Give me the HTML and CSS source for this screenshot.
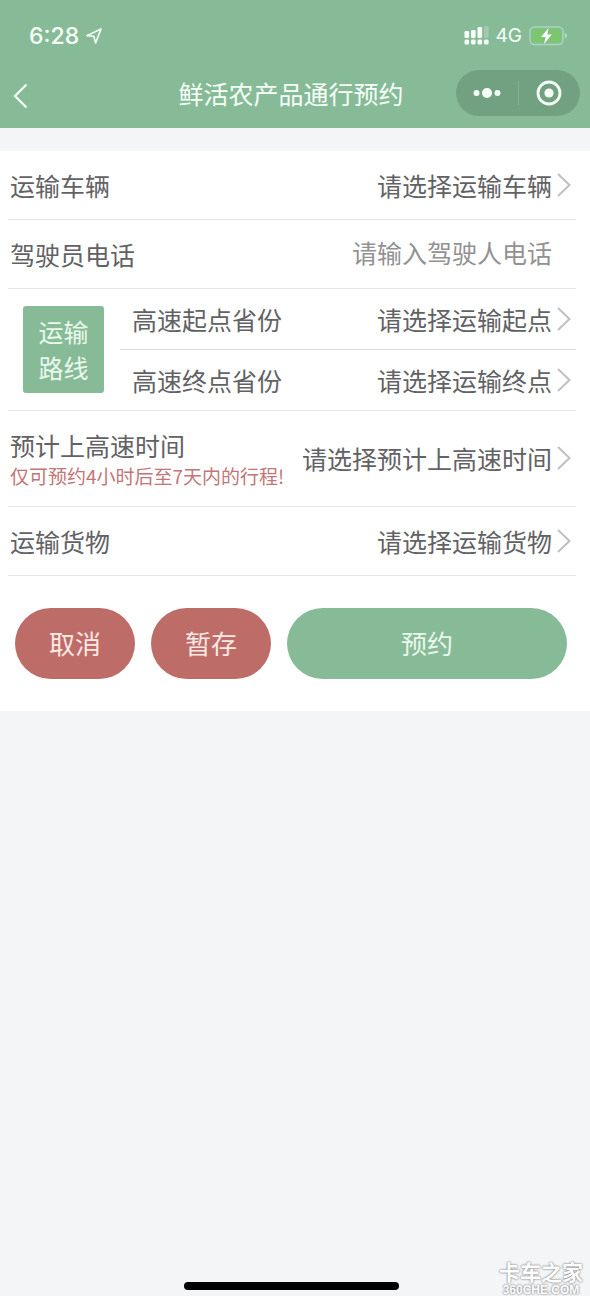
FILE: index.html
```html
<!DOCTYPE html>
<html lang="zh-CN">
<head>
<meta charset="utf-8">
<meta name="viewport" content="width=device-width, initial-scale=1">
<title>鲜活农产品通行预约</title>
<link rel="stylesheet" href="styles.css">
</head>
<body>
<div class="screen">
  <header class="header">
    <div class="status">
      <span class="time">6:28</span>
      <svg class="location" width="16" height="16" viewBox="0 0 16 16" aria-hidden="true"><path d="M1 7.600 15 1 9.600 15 7.800 8.300Z" fill="none" stroke="currentColor" stroke-width="1.600" stroke-linejoin="round"/></svg>
      <svg class="signal" width="26" height="20" viewBox="0 0 26 20" aria-hidden="true">
        <g fill="currentColor"><rect x="0.500" y="5" width="4.600" height="7" rx="1.300"/><rect x="7" y="4" width="4.600" height="8" rx="1.300"/><rect x="13.500" y="1" width="4.600" height="11" rx="1.300"/><rect x="20" y="0" width="4.600" height="12" rx="1.300" opacity=".22"/><rect x="0.500" y="13.500" width="4.600" height="5" rx="1.500"/><rect x="7" y="13.500" width="4.600" height="5" rx="1.500"/><rect x="13.500" y="13.500" width="4.600" height="5" rx="1.500"/><rect x="20" y="13.500" width="4.600" height="5" rx="1.500"/></g>
      </svg>
      <span class="network">4G</span>
      <svg class="battery" width="38" height="20" viewBox="0 0 38 20" aria-hidden="true">
        <rect x="1" y="1" width="33" height="17.500" rx="4.500" fill="none" stroke="#a9d8b4" stroke-width="1.400"/>
        <rect x="3.200" y="3.200" width="28.600" height="13.100" rx="2.500" fill="#7cc66c"/>
        <path d="M35.800 7v5.500q2-.7 2-2.750T35.800 7Z" fill="#b9dfc2"/>
        <path d="M19.500 2 12.200 11h4.400L15 18 22.800 8.600h-4.500Z" fill="#fff" stroke="#87bb98" stroke-width="1.200" paint-order="stroke"/>
      </svg>
    </div>
    <div class="nav">
      <button class="back" type="button" aria-label="返回"><svg width="16" height="26" viewBox="0 0 16 26"><path d="M13.500 1.500 2 13l11.500 11.500" fill="none" stroke="currentColor" stroke-width="2.200"/></svg></button>
      <h1 class="title">鲜活农产品通行预约</h1>
      <div class="capsule">
        <button class="capsule-button" type="button" aria-label="更多"><svg width="28" height="12" viewBox="0 0 28 12" fill="currentColor"><circle cx="3.500" cy="6" r="3"/><circle cx="14" cy="6" r="5"/><circle cx="24.500" cy="6" r="3"/></svg></button>
        <button class="capsule-button" type="button" aria-label="关闭"><svg width="26" height="26" viewBox="0 0 26 26"><circle cx="13" cy="13" r="11" fill="none" stroke="currentColor" stroke-width="2.800"/><circle cx="13" cy="13" r="4.600" fill="currentColor"/></svg></button>
      </div>
    </div>
  </header>

  <form class="form">
    <div class="row">
      <label class="label" for="vehicle">运输车辆</label>
      <select class="field" id="vehicle"><option>请选择运输车辆</option></select>
      <svg class="chevron" width="14" height="24" viewBox="0 0 14 24" aria-hidden="true"><path d="M1 1 12.500 12 1 23"/></svg>
    </div>
    <div class="row">
      <label class="label" for="phone">驾驶员电话</label>
      <input class="field phone" id="phone" type="tel" placeholder="请输入驾驶人电话">
    </div>
    <div class="route">
      <div class="route-tag"><span>运输</span><span>路线</span></div>
      <div class="route-rows">
        <div class="row route-row">
          <label class="label" for="start">高速起点省份</label>
          <select class="field" id="start"><option>请选择运输起点</option></select>
          <svg class="chevron" width="14" height="24" viewBox="0 0 14 24" aria-hidden="true"><path d="M1 1 12.500 12 1 23"/></svg>
        </div>
        <div class="row route-row">
          <label class="label" for="end">高速终点省份</label>
          <select class="field" id="end"><option>请选择运输终点</option></select>
          <svg class="chevron" width="14" height="24" viewBox="0 0 14 24" aria-hidden="true"><path d="M1 1 12.500 12 1 23"/></svg>
        </div>
      </div>
    </div>
    <div class="row row-time">
      <div class="label-group">
        <label class="label" for="when">预计上高速时间</label>
        <span class="hint">仅可预约4小时后至7天内的行程!</span>
      </div>
      <select class="field" id="when"><option>请选择预计上高速时间</option></select>
      <svg class="chevron" width="14" height="24" viewBox="0 0 14 24" aria-hidden="true"><path d="M1 1 12.500 12 1 23"/></svg>
    </div>
    <div class="row">
      <label class="label" for="goods">运输货物</label>
      <select class="field" id="goods"><option>请选择运输货物</option></select>
      <svg class="chevron" width="14" height="24" viewBox="0 0 14 24" aria-hidden="true"><path d="M1 1 12.500 12 1 23"/></svg>
    </div>
    <div class="actions">
      <button class="button" type="button">取消</button>
      <button class="button" type="button">暂存</button>
      <button class="button button-primary" type="button">预约</button>
    </div>
  </form>

  <div class="home-bar"></div>
  <div class="watermark"><span class="brand">卡车之家</span><span class="site">360CHE.COM</span></div>
</div>
</body>
</html>
```
FILE: styles.css
```css
* {
  box-sizing: border-box;
}

html {
  background: #fff;
}

body {
  margin: 0;
  font-family: "Noto Sans CJK SC", sans-serif;
  font-size: 25px;
  line-height: 36px;
  color: #626265;
}

button,
input,
select {
  font: inherit;
  color: inherit;
  margin: 0;
  padding: 0;
  border: 0;
  background: none;
}

svg {
  display: block;
  flex: none;
}

.screen {
  position: relative;
  display: flex;
  flex-direction: column;
  min-height: calc(100vh - 4px);
  padding-bottom: 6px;
  background: #f4f5f7;
}

.header {
  padding: 20px 10px 12px;
  margin-bottom: 23px;
  background: #87bb98;
  color: #f6fff8;
}

.status {
  display: flex;
  align-items: center;
  height: 32px;
  padding: 0 13px 0 19px;
  font-family: Inter, sans-serif;
  line-height: 32px;
}

.time {
  font-size: 23px;
  font-weight: 500;
}

.location {
  margin-left: 7px;
}

.signal {
  margin-left: auto;
}

.network {
  margin: 0 7px 0 6px;
  font-size: 19px;
}

.nav {
  display: grid;
  grid-template-columns: 116px 1fr 124px;
  align-items: center;
  margin-top: 18px;
}

.back {
  justify-self: start;
  padding: 6px 3px 0;
}

.title {
  margin: 0;
  font-size: 25px;
  font-weight: 400;
  text-align: center;
  white-space: nowrap;
}

.capsule {
  display: flex;
  height: 46px;
  padding: 11px 0;
  border-radius: 24px;
  background: #71a181;
}

.capsule-button {
  display: flex;
  flex: 1;
  align-items: center;
  justify-content: center;
}

.capsule-button + .capsule-button {
  border-left: 1px solid #81af90;
}

.form {
  padding: 0 14px 32px 8px;
  background: #fff;
}

.row {
  display: flex;
  align-items: center;
  min-height: 69px;
  padding: 0 5px 0 2px;
  border-bottom: 1px solid #e6e6e8;
}

.label {
  display: block;
  white-space: nowrap;
}

.field {
  flex: 1;
  min-width: 0;
  height: 36px;
  appearance: none;
  text-align: right;
  text-align-last: right;
  outline: none;
}

.phone {
  margin-right: 19px;
  margin-bottom: 4px;
}

.phone::placeholder {
  color: #929294;
  opacity: 1;
}

.chevron {
  margin-left: 5px;
  fill: none;
  stroke: #c0c0c4;
  stroke-width: 2;
}

.route {
  display: flex;
  align-items: center;
  gap: 16px;
  padding-left: 15px;
  border-bottom: 1px solid #e6e6e8;
}

.route-tag {
  display: flex;
  flex-direction: column;
  align-items: center;
  width: 81px;
  padding: 7px 0 8px;
  border-radius: 3px;
  background: #87bb98;
  color: #e9f8ec;
}

.route-rows {
  flex: 1;
}

.route-row {
  min-height: 60px;
  padding-left: 12px;
}

.route-row:first-child {
  min-height: 61px;
  border-color: #dcdcdf;
}

.route-row:last-child {
  border-bottom: 0;
}

.row-time {
  min-height: 96px;
  padding-bottom: 2px;
}

.label-group {
  width: 278px;
  margin-right: -20px;
}

.hint {
  display: block;
  font-size: 19px;
  line-height: 26px;
  color: #c27677;
  white-space: nowrap;
}

.actions {
  display: grid;
  grid-template-columns: 120px 120px 1fr;
  gap: 16px;
  padding: 32px 9px 0 7px;
}

.button {
  height: 71px;
  padding-bottom: 2px;
  border-radius: 36px;
  background: #be6c68;
  color: #fbe9e5;
  font-size: 26px;
}

.button-primary {
  background: #87bb98;
  color: #e9f8ec;
}

.home-bar {
  align-self: center;
  width: 215px;
  height: 8px;
  margin-top: auto;
  margin-right: 8px;
  border-radius: 4px;
  background: #000;
}

.watermark {
  position: absolute;
  right: 7px;
  bottom: 0;
  display: flex;
  flex-direction: column;
  align-items: center;
  color: #fff;
  font-weight: 700;
  text-shadow: 0 0 2px #8c8c90, 0 0 2px #8c8c90;
}

.brand {
  font-size: 21px;
  line-height: 26px;
}

.site {
  font-family: "Liberation Sans", sans-serif;
  font-size: 12px;
  line-height: 12px;
}
```
